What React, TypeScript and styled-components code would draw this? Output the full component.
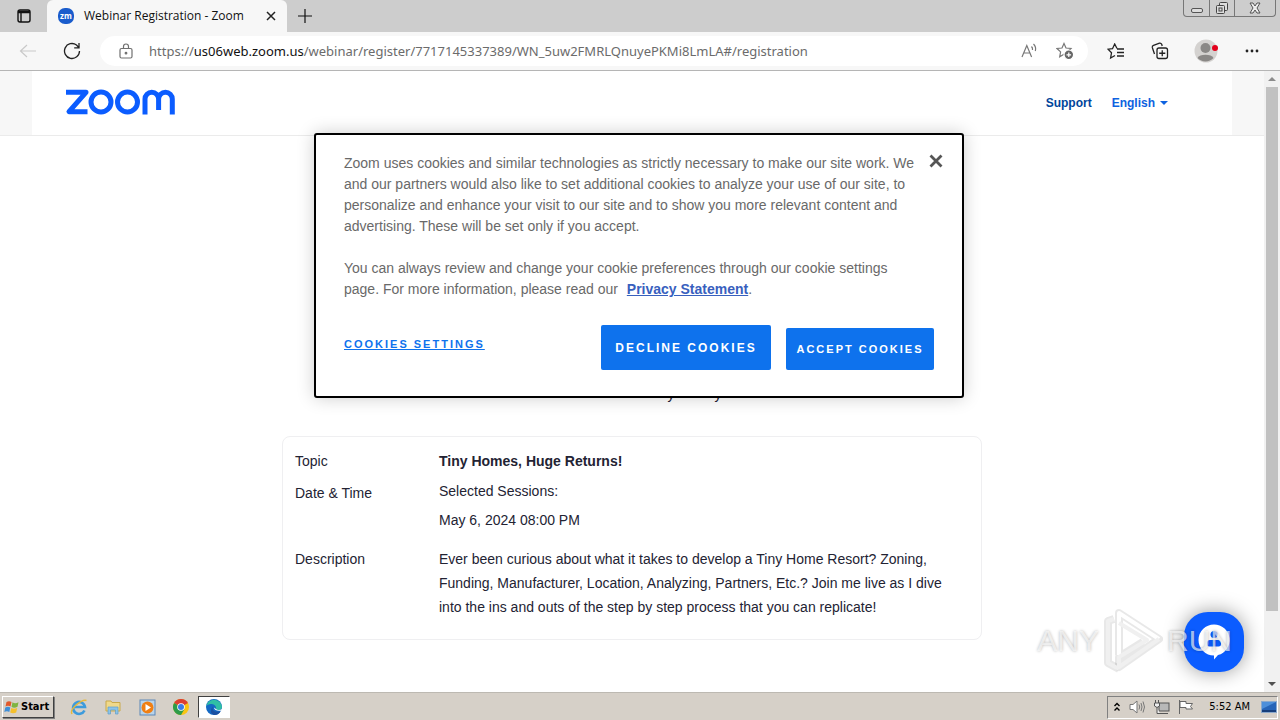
import React from "react";
import styled, { createGlobalStyle } from "styled-components";

const GlobalStyle = createGlobalStyle`
  * { box-sizing: border-box; }
  html, body { margin: 0; padding: 0; }
  body { background: #fff; font-family: "Liberation Sans", Arial, sans-serif; font-size: 14px; }
  button { border: 0; padding: 0; background: none; font: inherit; cursor: pointer; }
  p { margin: 0; }
`;

const Screen = styled.div`
  display: flex;
  flex-direction: column;
  min-height: 100vh;
`;

/* ---------- browser chrome ---------- */

const TabStrip = styled.div`
  display: flex;
  align-items: center;
  height: 32px;
  background: #cdcdcd;
`;

const TabMenuButton = styled.button`
  display: flex;
  align-items: center;
  justify-content: center;
  align-self: stretch;
  width: 47px;
`;

const Tab = styled.div`
  display: flex;
  align-items: center;
  align-self: stretch;
  width: 240px;
  padding: 0 8px 0 11px;
  border-radius: 6px 6px 0 0;
  background: #f7f7f7;
`;

const Favicon = styled.span`
  display: flex;
  align-items: center;
  justify-content: center;
  width: 16px;
  height: 16px;
  margin-right: 10px;
  border-radius: 7px;
  background: #1a5ccc;
  color: #fff;
  font: bold 8px/16px "Open Sans", sans-serif;
`;

const TabTitle = styled.span`
  flex: 1;
  color: #111;
  font: 12px/16px "Open Sans", sans-serif;
  white-space: nowrap;
`;

const GlyphButton = styled.button<{ $w: number }>`
  display: flex;
  flex: none;
  align-items: center;
  justify-content: center;
  width: ${(p) => p.$w}px;
  height: 28px;
`;

const WindowControls = styled.div`
  display: flex;
  align-self: flex-start;
  height: 17px;
  margin: 0 4px 0 auto;
  border: 1px solid #777;
  border-top: 0;
  border-radius: 0 0 4px 4px;
`;

const WindowButton = styled.button<{ $w: number }>`
  display: flex;
  align-items: center;
  justify-content: center;
  width: ${(p) => p.$w}px;
  & + & { border-left: 1px solid #777; }
`;

const Toolbar = styled.div`
  display: flex;
  align-items: center;
  height: 39px;
  padding: 0 6px;
  border-bottom: 1px solid #b5b5b5;
  background: #f7f7f7;
`;

const AddressBar = styled.div`
  display: flex;
  flex: 1;
  align-items: center;
  height: 30px;
  margin: 0 6px;
  padding: 0 5px 0 19px;
  border-radius: 15px;
  background: #fff;
`;

const Url = styled.span`
  flex: 1;
  margin-left: 16px;
  color: #6b6b6b;
  font: 13px/20px "Noto Sans", sans-serif;
  white-space: nowrap;
  b { color: #111; font-weight: 400; }
`;

/* ---------- page ---------- */

const Viewport = styled.div`
  position: relative;
  display: flex;
  flex: 1;
`;

const Page = styled.div`
  flex: 1;
  min-width: 0;
  background: #fff;
`;

const HeaderBand = styled.header`
  border-bottom: 1px solid #ebebeb;
  background: #f7f7f7;
`;

const HeaderInner = styled.div`
  display: flex;
  align-items: center;
  justify-content: space-between;
  max-width: 1200px;
  height: 64px;
  margin: 0 auto;
  padding: 0 64px 0 33px;
  background: #fff;
`;

const Nav = styled.nav`
  display: flex;
  gap: 20px;
`;

const NavLink = styled.a<{ $color: string }>`
  display: flex;
  align-items: center;
  gap: 5px;
  color: ${(p) => p.$color};
  font-size: 12px;
  font-weight: 700;
  line-height: 20px;
  text-decoration: none;
`;

const Caret = styled.span`
  border: 4px solid transparent;
  border-top-color: currentColor;
  border-bottom: 0;
`;

const Content = styled.main`
  max-width: 700px;
  margin: 0 auto;
  padding: 248px 0 52px;
`;

const HostLine = styled.p`
  display: flex;
  justify-content: center;
  gap: 40px;
  margin: 0 0 32px 125px;
  color: #232333;
  font-size: 14px;
  line-height: 20px;
`;

const Details = styled.dl`
  display: grid;
  grid-template-columns: 144px 1fr;
  margin: 0;
  padding: 12px 30px 12px 12px;
  border: 1px solid #efeff1;
  border-radius: 8px;
  color: #232333;
  font-size: 14px;
  line-height: 24px;
`;

const Term = styled.dt`
  margin: 0;
`;

const Value = styled.dd<{ $strong?: boolean }>`
  margin: 0 0 8px;
  font-weight: ${(p) => (p.$strong ? 700 : 400)};
`;

const Session = styled.p`
  margin-bottom: 9px;
  line-height: 20px;
`;

const Scrollbar = styled.div`
  display: flex;
  flex-direction: column;
  align-items: center;
  width: 16px;
  background: #f1f1f1;
`;

const ScrollArrow = styled.span<{ $up?: boolean }>`
  display: flex;
  align-items: center;
  justify-content: center;
  height: 16px;
  &::before {
    content: "";
    border: 4px solid transparent;
    ${(p) =>
      p.$up
        ? "border-bottom-color: #8b8b8b; border-top: 0;"
        : "border-top-color: #505050; border-bottom: 0;"}
  }
`;

const ScrollTrack = styled.div`
  flex: 1;
  width: 12px;
`;

const ScrollThumb = styled.div`
  height: 89%;
  background: #c1c1c1;
`;

/* ---------- cookie dialog ---------- */

const DialogLayer = styled.div`
  position: absolute;
  inset: 62px 2px auto 0;
  display: flex;
  justify-content: center;
`;

const Dialog = styled.section`
  position: relative;
  width: 650px;
  padding: 18px 28px 26px;
  border: 2px solid #000;
  border-radius: 3px;
  background: #fff;
  box-shadow: 0 0 18px rgba(0, 0, 0, 0.2);
  color: #696969;
`;

const CookieText = styled.p`
  padding-right: 8px;
  font-size: 14px;
  line-height: 21px;
  & + & { margin-top: 21px; }
  a { margin-left: 5px; color: #3860be; font-weight: 700; }
`;

const CloseButton = styled.button`
  position: absolute;
  top: 16px;
  right: 16px;
  display: flex;
  align-items: center;
  justify-content: center;
  width: 20px;
  height: 20px;
`;

const Actions = styled.div`
  display: flex;
  align-items: flex-end;
  gap: 15px;
  margin-top: 25px;
`;

const SettingsButton = styled.button`
  margin: 0 auto 16px 0;
  color: #0e72ed;
  font-size: 11px;
  font-weight: 700;
  line-height: 20px;
  letter-spacing: 2px;
  text-decoration: underline;
`;

const ActionButton = styled.button<{ $w: number; $h: number; $size: number }>`
  width: ${(p) => p.$w}px;
  height: ${(p) => p.$h}px;
  border-radius: 2px;
  background: #0e72ed;
  color: #fff;
  font-size: ${(p) => p.$size}px;
  font-weight: 700;
  letter-spacing: 2px;
  white-space: nowrap;
`;

/* ---------- floating pieces ---------- */

const ChatButton = styled.button`
  position: absolute;
  right: 36px;
  bottom: 20px;
  width: 60px;
  height: 60px;
  border-radius: 24px;
  background: #0b5cff;
  box-shadow: 0 0 20px rgba(0, 0, 0, 0.4);
`;

const Watermark = styled.div`
  position: absolute;
  right: 48px;
  bottom: 19px;
  display: flex;
  align-items: center;
  gap: 4px;
  color: rgba(255, 255, 255, 0.65);
  font: 30px/64px "Liberation Sans", sans-serif;
  text-shadow: 0 0 3px rgba(0, 0, 0, 0.3);
  pointer-events: none;
`;

/* ---------- taskbar ---------- */

const Taskbar = styled.footer`
  display: flex;
  align-items: center;
  height: 28px;
  padding: 1px 2px 0;
  border-top: 1px solid #bdb9b2;
  background: #d6d0c8;
  color: #000;
  font: 11px/20px "DejaVu Sans Condensed", "DejaVu Sans", sans-serif;
`;

const StartButton = styled.button`
  display: flex;
  align-items: center;
  gap: 1px;
  width: 52px;
  height: 22px;
  margin-right: 8px;
  padding-left: 1px;
  border: 1px solid;
  border-color: #fff #404040 #404040 #fff;
  box-shadow: 1px 1px 0 #808080;
  font-weight: 700;
`;

const TaskItem = styled.button<{ $active?: boolean }>`
  display: flex;
  align-items: center;
  justify-content: center;
  width: ${(p) => (p.$active ? 32 : 34)}px;
  height: 22px;
  border: 1px solid;
  border-color: ${(p) => (p.$active ? "#404040 #fff #fff #404040" : "transparent")};
  background: ${(p) => (p.$active ? "#fff" : "none")};
`;

const Tray = styled.div`
  display: flex;
  align-items: center;
  gap: 7px;
  height: 23px;
  margin-left: auto;
  padding: 0 0 0 4px;
  border: 1px solid;
  border-color: #808080 #fff #fff #808080;
  white-space: nowrap;
  time { margin: 0 4px 0 8px; }
`;

const ZoomLogo = () => (
  <svg width="111" height="28" viewBox="65 89 111 28" fill="none" stroke="#0b5cff" strokeWidth="5" role="img" aria-label="Zoom">
    <path d="M66 92.3H86L69 111.7H87.5" strokeLinejoin="round" />
    <circle cx="101" cy="102" r="10" />
    <circle cx="127.500" cy="102" r="10" />
    <path d="M145 114.500V99a6.800 6.800 0 0 1 13.600 0v11M158.600 99a6.800 6.800 0 0 1 13.700 0v15.500" />
  </svg>
);

const stroke = (color: string, w = 1.2) => ({ fill: "none", stroke: color, strokeWidth: w });

export default function App() {
  return (
    <Screen>
      <GlobalStyle />
      <TabStrip>
        <TabMenuButton aria-label="Tab actions">
          <svg width="16" height="16" viewBox="0 0 16 16" {...stroke("#111", 1.4)}>
            <rect x="2" y="2" width="12" height="12" rx="2" />
            <path d="M2 3.500H14M2 4.500H14M5 4V14" />
          </svg>
        </TabMenuButton>
        <Tab>
          <Favicon>zm</Favicon>
          <TabTitle>Webinar Registration - Zoom</TabTitle>
          <GlyphButton $w={16} aria-label="Close tab">
            <svg width="10" height="10" viewBox="0 0 10 10" {...stroke("#222", 1.5)}><path d="M1 1L9 9M9 1L1 9" /></svg>
          </GlyphButton>
        </Tab>
        <GlyphButton $w={36} aria-label="New tab">
          <svg width="16" height="16" viewBox="0 0 16 16" {...stroke("#111", 1.2)}><path d="M8 1V15M1 8H15" /></svg>
        </GlyphButton>
        <WindowControls>
          <WindowButton $w={25} aria-label="Minimize">
            <svg width="12" height="14" viewBox="0 0 12 14"><rect x=".5" y="7.500" width="11" height="4" rx="1.500" fill="#ddd" stroke="#555" /></svg>
          </WindowButton>
          <WindowButton $w={25} aria-label="Restore">
            <svg width="14" height="14" viewBox="0 0 14 14" fill="#ddd" stroke="#444"><rect x="4.500" y="1.500" width="8" height="8" rx="1" /><rect x="1.500" y="4.500" width="8" height="8" rx="1" /><rect x="4" y="7" width="3" height="3" /></svg>
          </WindowButton>
          <WindowButton $w={41} aria-label="Close">
            <svg width="12" height="12" viewBox="0 0 12 12" fill="#eee" stroke="#555"><path d="M1 1H4L6 4L8 1H11L8 6L11 11H8L6 8L4 11H1L4 6Z" /></svg>
          </WindowButton>
        </WindowControls>
      </TabStrip>
      <Toolbar>
        <GlyphButton $w={44} aria-label="Back">
          <svg width="18" height="14" viewBox="0 0 18 14" {...stroke("#c9c9c9")}><path d="M17 7H1M8 1L1.500 7L8 13" /></svg>
        </GlyphButton>
        <GlyphButton $w={44} aria-label="Refresh">
          <svg width="18" height="18" viewBox="0 0 18 18" {...stroke("#222", 1.3)}><path d="M16.500 9A7.500 7.500 0 1 1 13.500 3L15.800 5.500M16 1V5.800H11.200" /></svg>
        </GlyphButton>
        <AddressBar>
          <svg width="14" height="16" viewBox="0 0 14 16" {...stroke("#707070")}>
            <rect x="1" y="5.500" width="12" height="9.500" rx="1.500" /><path d="M4.500 5.500V3.500a2.500 2.500 0 0 1 5 0v2" /><circle cx="7" cy="10.200" r=".8" fill="#707070" />
          </svg>
          <Url>https://<b>us06web.zoom.us</b>/webinar/register/7717145337389/WN_5uw2FMRLQnuyePKMi8LmLA#/registration</Url>
          <GlyphButton $w={36} aria-label="Read aloud">
            <svg width="17" height="16" viewBox="0 0 17 16" {...stroke("#777")}><path d="M1 14L5.800 2.500L10.600 14M2.700 10H9M10.500 3.500a4 4 0 0 1 1 3.500M12.500 1a7 7 0 0 1 1.800 7" /></svg>
          </GlyphButton>
          <GlyphButton $w={36} aria-label="Add to favorites">
            <svg width="18" height="18" viewBox="0 0 18 18" {...stroke("#777")}><path d="M8 1.500L10 6L15 6.500L11.300 10L12.300 14.500L8 12.200L3.700 14.700L4.600 9.900L1 6.500L6 6Z" /><circle cx="12.800" cy="12.800" r="4.800" fill="#666" stroke="#fff" /><path d="M12.800 10.500V15.100M10.500 12.800H15.100" stroke="#fff" /></svg>
          </GlyphButton>
        </AddressBar>
        <GlyphButton $w={44} aria-label="Favorites">
          <svg width="18" height="17" viewBox="0 0 18 17" {...stroke("#222", 1.3)}><path d="M10 5.500L7.700 1L5.500 5.700L1 6.200L4.500 9.800L3.600 15L8 12.500M10 6H17M10 9.500H17M10 13H17" /></svg>
        </GlyphButton>
        <GlyphButton $w={44} aria-label="Collections">
          <svg width="18" height="18" viewBox="0 0 18 18" {...stroke("#222", 1.3)}><path d="M3.500 12L1.300 5.500Q1 4 2.500 3.400L8.500 1.200Q10 .9 10.700 2.300L11.200 4" /><rect x="6" y="6" width="10.500" height="10.500" rx="2" /><path d="M11.250 8.200V14.300M8.200 11.250H14.300" /></svg>
        </GlyphButton>
        <GlyphButton $w={48} aria-label="Profile">
          <svg width="24" height="24" viewBox="0 0 24 24"><circle cx="12" cy="12" r="11.500" fill="#d4d2d0" /><circle cx="11.500" cy="9" r="5" fill="#8a8886" /><path d="M3.500 19a8.500 5 0 0 1 16 0a11 11 0 0 1-16 0" fill="#8a8886" /><circle cx="21" cy="9" r="3" fill="#e3001b" /></svg>
        </GlyphButton>
        <GlyphButton $w={44} aria-label="Settings and more">
          <svg width="14" height="4" viewBox="0 0 14 4" fill="#222"><circle cx="2" cy="2" r="1.400" /><circle cx="7" cy="2" r="1.400" /><circle cx="12" cy="2" r="1.400" /></svg>
        </GlyphButton>
      </Toolbar>
      <Viewport>
        <Page>
          <HeaderBand>
            <HeaderInner>
              <ZoomLogo />
              <Nav>
                <NavLink href="#support" $color="#00459b">Support</NavLink>
                <NavLink href="#language" $color="#0e62e0">English <Caret /></NavLink>
              </Nav>
            </HeaderInner>
          </HeaderBand>
          <Content>
            <HostLine><span>y</span><span>y</span></HostLine>
            <Details>
              <Term>Topic</Term>
              <Value $strong>Tiny Homes, Huge Returns!</Value>
              <Term>Date &amp; Time</Term>
              <Value>
                <Session>Selected Sessions:</Session>
                <Session>May 6, 2024 08:00 PM</Session>
              </Value>
              <Term>Description</Term>
              <Value>
                Ever been curious about what it takes to develop a Tiny Home Resort? Zoning,
                Funding, Manufacturer, Location, Analyzing, Partners, Etc.? Join me live as I dive
                into the ins and outs of the step by step process that you can replicate!
              </Value>
            </Details>
          </Content>
        </Page>
        <Scrollbar>
          <ScrollArrow $up />
          <ScrollTrack><ScrollThumb /></ScrollTrack>
          <ScrollArrow />
        </Scrollbar>
        <DialogLayer>
          <Dialog role="dialog" aria-label="Cookie notice">
            <CookieText>
              Zoom uses cookies and similar technologies as strictly necessary to make our site work. We
              and our partners would also like to set additional cookies to analyze your use of our site, to
              personalize and enhance your visit to our site and to show you more relevant content and
              advertising. These will be set only if you accept.
            </CookieText>
            <CookieText>
              You can always review and change your cookie preferences through our cookie settings
              page. For more information, please read our <a href="#privacy">Privacy Statement</a>.
            </CookieText>
            <CloseButton aria-label="Close">
              <svg width="14" height="14" viewBox="0 0 14 14" {...stroke("#555", 2.8)}><path d="M1.500 1.500L12.500 12.500M12.500 1.500L1.500 12.500" /></svg>
            </CloseButton>
            <Actions>
              <SettingsButton>COOKIES SETTINGS</SettingsButton>
              <ActionButton $w={170} $h={45} $size={12}>DECLINE COOKIES</ActionButton>
              <ActionButton $w={148} $h={42} $size={11}>ACCEPT COOKIES</ActionButton>
            </Actions>
          </Dialog>
        </DialogLayer>
        <ChatButton aria-label="Open chat">
          <svg width="60" height="60" viewBox="0 0 60 60"><path d="M30 12.500a15.500 15.500 0 0 1 4 30.500L30 47.500V43.500A15.500 15.500 0 0 1 30 12.500Z" fill="#fff" /><circle cx="30" cy="22.500" r="3.500" fill="#0b5cff" /><path d="M23 31a3 3 0 0 1 3-3h8a3 3 0 0 1 3 3v1a2.500 2.500 0 0 1-2.500 2.500h-9A2.500 2.500 0 0 1 23 32Z" fill="#0b5cff" /></svg>
        </ChatButton>
        <Watermark>
          <span>ANY</span>
          <svg width="60" height="64" viewBox="0 0 60 64" fill="none" strokeLinejoin="round">
            <g stroke="rgba(0,0,0,.09)" strokeWidth="8"><path d="M16 46V4L56 30L16 58V48L40 33" /><path d="M11 10L5 12V54L16 60" /></g>
            <g stroke="#fff" strokeWidth="4"><path d="M16 46V4L56 30" /></g>
            <g stroke="#f0f0f0" strokeWidth="4"><path d="M56 30L16 58V48L44 31L16 14" /><path d="M11 10L5 12V54L16 60" /></g>
          </svg>
          <span>RUN</span>
        </Watermark>
      </Viewport>
      <Taskbar>
        <StartButton>
          <svg width="16" height="16" viewBox="0 0 16 16"><path d="M2.500 3Q5 1.500 7.500 3L6.500 7.500Q4 6 1.500 7.500Z" fill="#e2592b" /><path d="M8.500 3.300Q11 5 14.500 3.300L13.500 7.800Q10 9.500 7.500 7.800Z" fill="#7fb441" /><path d="M1.300 8.500Q4 7 6.300 8.500L5.300 13Q3 11.500.3 13Z" fill="#3f8fd8" /><path d="M7.300 8.900Q10 10.500 13.200 8.900L12.200 13.500Q9 15 6.200 13.400Z" fill="#f5c02c" /></svg>
          Start
        </StartButton>
        <TaskItem aria-label="Internet Explorer">
          <svg width="18" height="18" viewBox="0 0 18 18" fill="none"><path d="M14.500 12.500A6 6 0 1 1 15 9H4" stroke="#3d9bdc" strokeWidth="2.600" /><path d="M2 16C-1 11 12 1 16.500 2.500" stroke="#e8b93a" strokeWidth="1.400" /></svg>
        </TaskItem>
        <TaskItem aria-label="File Explorer">
          <svg width="18" height="18" viewBox="0 0 18 18"><path d="M2 3H7L8 4.500H16V13H2Z" fill="#f0d98a" stroke="#c9a94a" /><path d="M4 16V9H14V16H11.500V12H6.500V16Z" fill="#8cc4e8" stroke="#5f9dc8" strokeWidth=".7" /></svg>
        </TaskItem>
        <TaskItem aria-label="Media Player">
          <svg width="17" height="17" viewBox="0 0 17 17"><rect x="1" y="1" width="15" height="15" fill="#b9d4ea" stroke="#5d87b8" /><circle cx="8.500" cy="8.500" r="6" fill="#f07f13" /><path d="M6.500 5L12 8.500L6.500 12Z" fill="#fff" /></svg>
        </TaskItem>
        <TaskItem aria-label="Chrome">
          <svg width="16" height="16" viewBox="0 0 16 16"><circle cx="8" cy="8" r="8" fill="#f9c513" /><path d="M8 8L1.070 4A8 8 0 0 1 14.930 4Z" fill="#dc3f33" /><path d="M8 8L1.070 4A8 8 0 0 0 8 16L11.500 10Z" fill="#2d9c4a" /><circle cx="8" cy="8" r="3.800" fill="#fff" /><circle cx="8" cy="8" r="3" fill="#3b7de8" /></svg>
        </TaskItem>
        <TaskItem $active aria-label="Edge">
          <svg width="18" height="18" viewBox="0 0 18 18"><circle cx="9" cy="9" r="8" fill="#1469c4" /><path d="M1.200 8A8 8 0 0 1 17 9Q16.500 12.500 12.500 12Q10.500 11.500 11 9.500Q10 5.500 5.500 6Q2.500 6.300 1.200 8Z" fill="#30bfa5" /><path d="M7.500 8.500Q6.500 15 15.500 13.500Q13 17.500 9 17Q3.500 15 7.500 8.500Z" fill="#1b4fa0" /><path d="M9 9.500Q9.500 13.500 17 12.500L17.500 11Q13 13 11 11Z" fill="#fff" /></svg>
        </TaskItem>
        <Tray>
          <svg width="10" height="12" viewBox="0 0 10 12" {...stroke("#000", 1.4)}><path d="M2.500 5L5 2.500L7.500 5M2.500 9.500L5 7L7.500 9.500" /></svg>
          <svg width="17" height="16" viewBox="0 0 17 16" {...stroke("#777", 1)}><path d="M1 5.500H4L8 2V14L4 10.500H1Z" fill="#fff" /><path d="M10 5.500Q11.500 8 10 10.500M12 4Q14 8 12 12M14 2.500Q17 8 14 13.500" /></svg>
          <svg width="17" height="16" viewBox="0 0 17 16" {...stroke("#555", 1)}><rect x="6" y="4" width="10" height="8" fill="#b8b8b8" /><path d="M7 14.500H15M2.500 1V4M5.500 1V4M1.500 4H6.500V7L4 8.500L1.500 7ZM4 8.500V14.500H7" fill="#eee" /></svg>
          <svg width="17" height="16" viewBox="0 0 17 16" {...stroke("#666", 1)}><path d="M2.500 1V15" /><path d="M3 2.500H9V4.500H15.500L13.500 7.500L15.500 10H9V8.500H3Z" fill="#fff" /></svg>
          <time>5:52 AM</time>
          <svg width="16" height="16" viewBox="0 0 16 16"><rect x=".5" y="2.500" width="15" height="11" fill="#2664b8" stroke="#8ba9cc" /><path d="M1 3H15L1 10Z" fill="#4d8fda" /><path d="M1 12H15" stroke="#173f7c" strokeWidth="2" /></svg>
        </Tray>
      </Taskbar>
    </Screen>
  );
}
